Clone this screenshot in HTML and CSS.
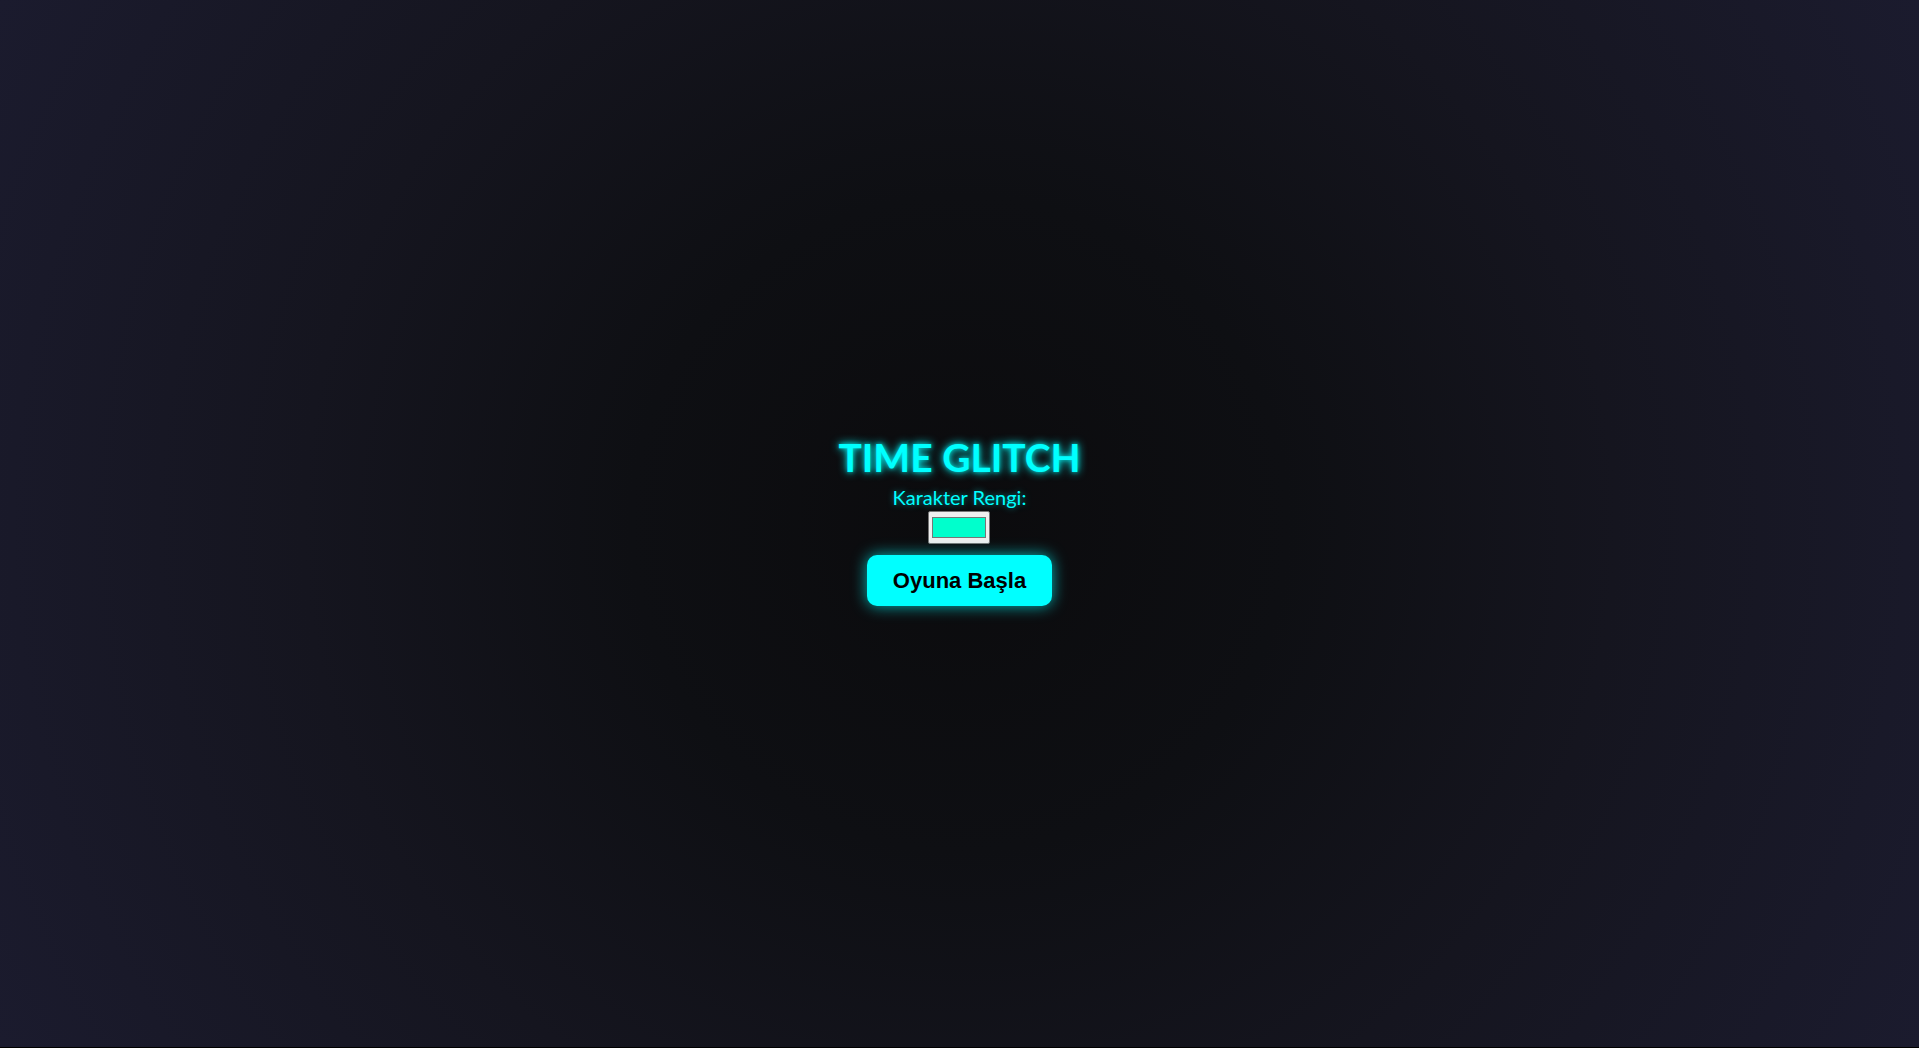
FILE: index.html
```html
<!DOCTYPE html>
<html lang="tr">
<head>
<meta charset="utf-8">
<title>Time Glitch</title>
<link rel="stylesheet" href="styles.css">
</head>
<body>
<main class="menu">
  <h1 class="title">TIME GLITCH</h1>
  <label class="color-label" for="color">Karakter Rengi:</label>
  <div class="color-input"><span class="swatch"></span></div>
  <button class="start-btn">Oyuna Başla</button>
</main>
</body>
</html>
```
FILE: styles.css
```css
html {
  margin: 0;
  padding: 0;
  background: #000;
}
body {
  margin: 0;
  height: calc(100vh - 1px);
  background: radial-gradient(circle at 50% 50%, #0b0b0d 0%, #0e0f13 30%, #15151f 60%, #1b1b2e 100%);
  display: flex;
  align-items: center;
  justify-content: center;
  font-family: "Segoe UI", "Lato", "Noto Sans", sans-serif;
}
.menu {
  display: flex;
  flex-direction: column;
  align-items: center;
  margin-bottom: 7px;
}
.title {
  margin: 0;
  font-size: 39px;
  font-weight: 700;
  color: #00ffff;
  line-height: 44px;
  text-shadow: 0 0 10px #00ffff, 0 0 4px rgba(0,255,255,0.6);
}
.color-label {
  margin-top: 6px;
  color: #00ffff;
  font-size: 20px;
  line-height: 24px;
  text-shadow: 0 0 6px rgba(0,255,255,0.5);
}
.color-input {
  margin-top: 2px;
  width: 62px;
  height: 33px;
  box-sizing: border-box;
  background: #efefef;
  border: 1px solid #767676;
  border-radius: 2px;
  padding: 5px 3px 5px 3px;
  display: flex;
}
.swatch {
  flex: 1;
  background: #00ffcc;
  border: 1px solid #777;
}
.start-btn {
  margin-top: 11px;
  font-family: "Liberation Sans", Arial, sans-serif;
  font-weight: 700;
  font-size: 22px;
  line-height: 25px;
  padding: 13px 26px;
  border: none;
  border-radius: 10px;
  background: #00ffff;
  color: #000;
  box-shadow: 0 0 15px rgba(0,255,255,0.7);
  cursor: pointer;
}
```
